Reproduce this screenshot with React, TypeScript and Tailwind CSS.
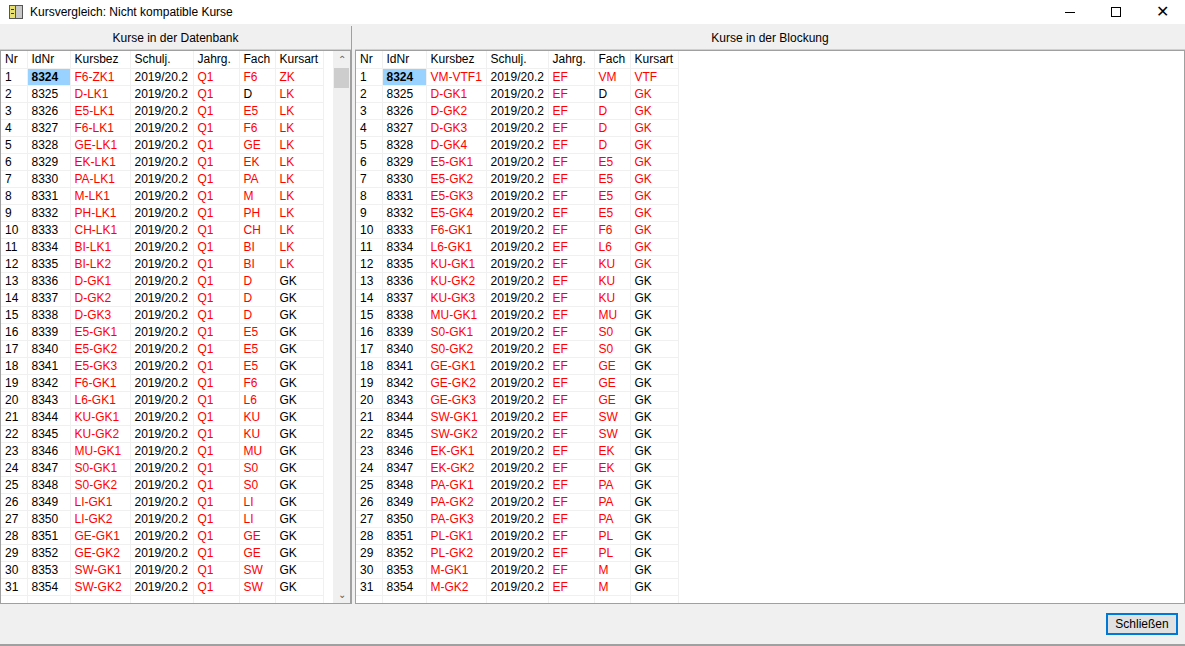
import React from "react";

const L: [string, string, string][] = [
  ["F6-ZK1","F6","ZK"],["D-LK1","D","LK"],["E5-LK1","E5","LK"],["F6-LK1","F6","LK"],["GE-LK1","GE","LK"],["EK-LK1","EK","LK"],["PA-LK1","PA","LK"],["M-LK1","M","LK"],["PH-LK1","PH","LK"],["CH-LK1","CH","LK"],["BI-LK1","BI","LK"],["BI-LK2","BI","LK"],["D-GK1","D","GK"],["D-GK2","D","GK"],["D-GK3","D","GK"],["E5-GK1","E5","GK"],["E5-GK2","E5","GK"],["E5-GK3","E5","GK"],["F6-GK1","F6","GK"],["L6-GK1","L6","GK"],["KU-GK1","KU","GK"],["KU-GK2","KU","GK"],["MU-GK1","MU","GK"],["S0-GK1","S0","GK"],["S0-GK2","S0","GK"],["LI-GK1","LI","GK"],["LI-GK2","LI","GK"],["GE-GK1","GE","GK"],["GE-GK2","GE","GK"],["SW-GK1","SW","GK"],["SW-GK2","SW","GK"],["","",""],
];
const R: [string, string, string][] = [
  ["VM-VTF1","VM","VTF"],["D-GK1","D","GK"],["D-GK2","D","GK"],["D-GK3","D","GK"],["D-GK4","D","GK"],["E5-GK1","E5","GK"],["E5-GK2","E5","GK"],["E5-GK3","E5","GK"],["E5-GK4","E5","GK"],["F6-GK1","F6","GK"],["L6-GK1","L6","GK"],["KU-GK1","KU","GK"],["KU-GK2","KU","GK"],["KU-GK3","KU","GK"],["MU-GK1","MU","GK"],["S0-GK1","S0","GK"],["S0-GK2","S0","GK"],["GE-GK1","GE","GK"],["GE-GK2","GE","GK"],["GE-GK3","GE","GK"],["SW-GK1","SW","GK"],["SW-GK2","SW","GK"],["EK-GK1","EK","GK"],["EK-GK2","EK","GK"],["PA-GK1","PA","GK"],["PA-GK2","PA","GK"],["PA-GK3","PA","GK"],["PL-GK1","PL","GK"],["PL-GK2","PL","GK"],["M-GK1","M","GK"],["M-GK2","M","GK"],["","",""],
];

const RED = "text-[#ff0000]";

function Grid({ data, jahrg, widths }: { data: [string, string, string][]; jahrg: string; widths: number[] }) {
  const heads = ["Nr", "IdNr", "Kursbez", "Schulj.", "Jahrg.", "Fach", "Kursart"];
  const cell = "h-[17px] p-0 leading-[16px] pl-[4px] border-r border-b border-[#f0f0f0] whitespace-nowrap overflow-hidden";
  return (
    <table className="border-collapse table-fixed text-[12px]" style={{ width: widths.reduce((a, b) => a + b, 0) }}>
      <colgroup>{widths.map((w, i) => <col key={i} style={{ width: w }} />)}</colgroup>
      <thead>
        <tr className="h-[17px]">{heads.map(h => <th key={h} className={`${cell} font-normal text-left text-black`}>{h}</th>)}</tr>
      </thead>
      <tbody>
        {data.map((r, i) => {
          const empty = r[0] === "";
          const n = 8324 + i;
          return (
            <tr key={i} className="h-[17px]">
              <td className={cell}>{empty ? "" : i + 1}</td>
              <td className={`${cell} ${i === 0 ? "bg-[#99d1ff] font-bold" : ""}`}>{empty ? "" : n}</td>
              <td className={`${cell} ${RED}`}>{r[0]}</td>
              <td className={cell}>{empty ? "" : "2019/20.2"}</td>
              <td className={`${cell} ${RED}`}>{empty ? "" : jahrg}</td>
              <td className={`${cell} ${i === 1 ? "text-black" : RED}`}>{r[1]}</td>
              <td className={`${cell} ${i < 12 ? RED : "text-black"}`}>{r[2]}</td>
            </tr>
          );
        })}
      </tbody>
    </table>
  );
}

export default function App() {
  return (
    <div className="w-[1185px] h-[646px] bg-[#f0f0f0] flex flex-col overflow-hidden text-black" style={{ fontFamily: "'Liberation Sans', Arial, sans-serif" }}>
      <div className="h-[24px] bg-white flex items-center shrink-0">
        <svg width="16" height="16" viewBox="0 0 16 16" className="ml-[8px]">
          <rect x="1" y="1" width="14" height="14" fill="#555" />
          <rect x="2" y="2" width="5" height="12" fill="#e8e070" />
          <rect x="8" y="2" width="6" height="12" fill="#c8c8c8" />
          <rect x="3" y="5" width="3" height="1" fill="#333" />
          <rect x="3" y="9" width="3" height="1" fill="#333" />
        </svg>
        <span className="ml-[6px] text-[12px]">Kursvergleich: Nicht kompatible Kurse</span>
        <div className="ml-auto flex items-center">
          <div className="w-[46px] flex justify-center"><div className="w-[10px] h-px bg-black" /></div>
          <div className="w-[46px] flex justify-center"><div className="w-[10px] h-[10px] border border-black" /></div>
          <div className="w-[46px] flex justify-center text-[16px] leading-none">✕</div>
        </div>
      </div>
      <div className="flex h-[578px] mt-[2px] shrink-0">
        <div className="w-[352px] flex flex-col border-r border-[#a0a0a0] mr-[3px]">
          <div className="h-[24px] flex items-center justify-center text-[12px] border-b border-[#d0d0d0]">Kurse in der Datenbank</div>
          <div className="flex-1 flex bg-white border border-[#a0a0a0] overflow-hidden">
            <div className="w-[332px] overflow-hidden">
              <Grid data={L} jahrg="Q1" widths={[26, 43, 60, 63, 46, 36, 48]} />
            </div>
            <div className="w-[17px] bg-[#f0f0f0] flex flex-col items-center">
              <span className="text-[10px] text-[#606060] h-[17px] leading-[17px]">⌃</span>
              <div className="w-[15px] h-[20px] bg-[#cdcdcd]" />
              <span className="mt-auto text-[10px] text-[#606060] h-[17px] leading-[17px]">⌄</span>
            </div>
          </div>
        </div>
        <div className="flex-1 flex flex-col">
          <div className="h-[24px] flex items-center justify-center text-[12px] border-b border-[#d0d0d0]">Kurse in der Blockung</div>
          <div className="flex-1 bg-white border border-[#a0a0a0] overflow-hidden">
            <Grid data={R} jahrg="EF" widths={[26, 44, 60, 62, 46, 36, 48]} />
          </div>
        </div>
      </div>
      <div className="flex-1 flex items-center justify-end pr-[7px] border-b-2 border-[#a0a0a0]">
        <button className="w-[72px] h-[22px] bg-[#e1e1e1] border-2 border-[#0078d7] text-[12px]">Schließen</button>
      </div>
    </div>
  );
}
